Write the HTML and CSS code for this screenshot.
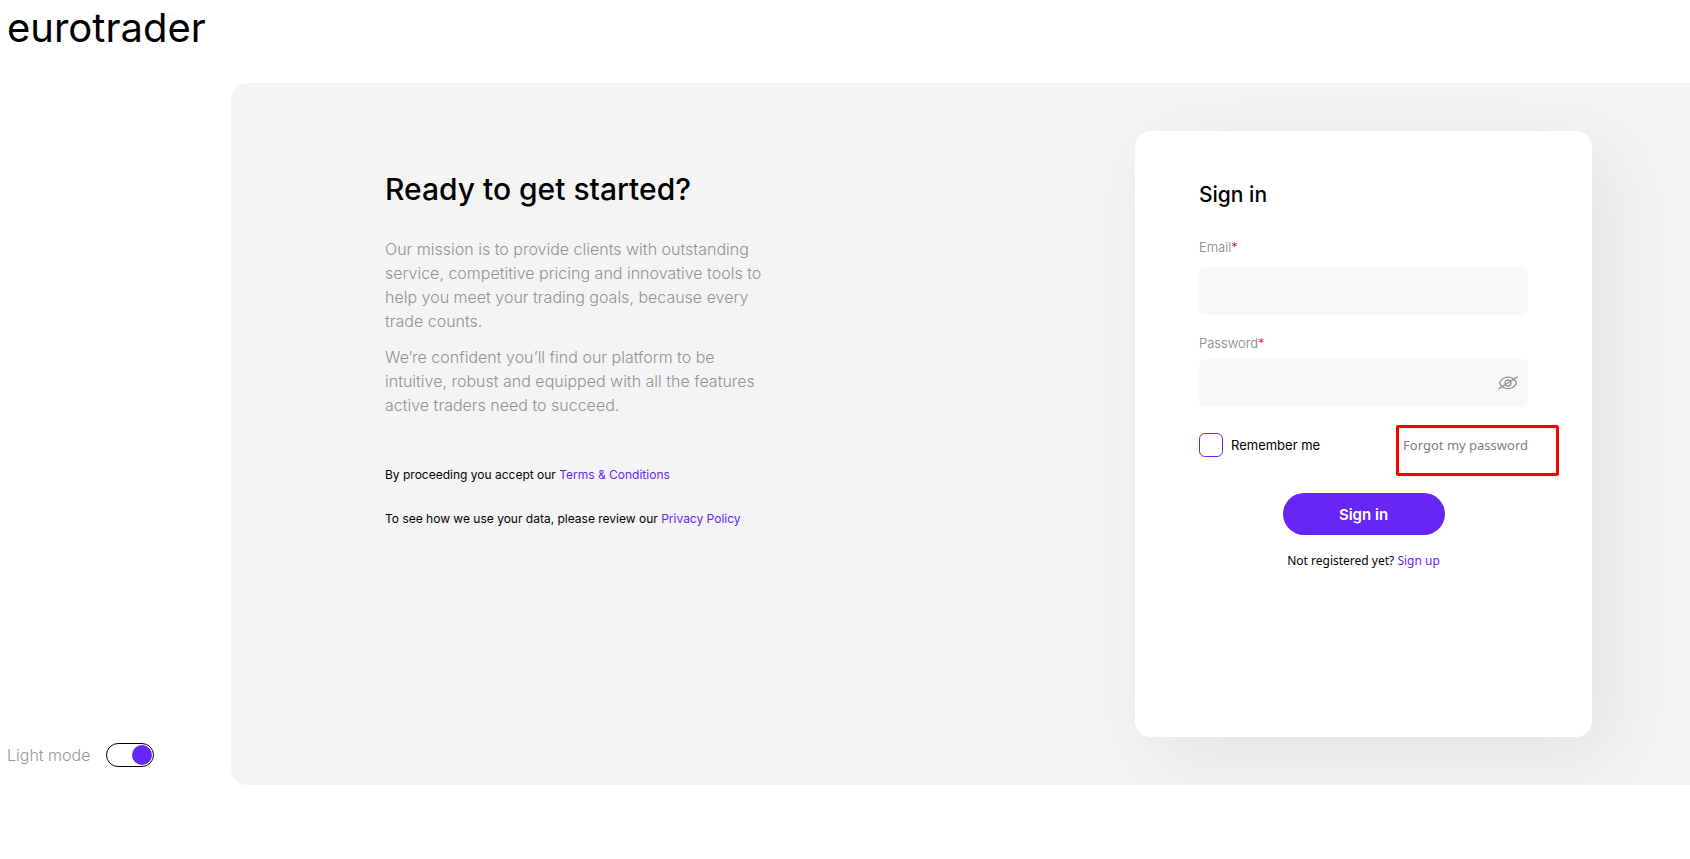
FILE: index.html
```
<!DOCTYPE html>
<html lang="en">
<head>
<meta charset="utf-8">
<meta name="viewport" content="width=device-width, initial-scale=1">
<title>eurotrader – Sign in</title>
<link rel="stylesheet" href="styles.css">
</head>
<body>
<header class="header"><a class="logo" href="#">eurotrader</a></header>
<div class="layout">
  <aside class="sidebar">
    <label class="mode" for="mode">Light mode</label>
    <input class="switch" id="mode" type="checkbox" role="switch" checked>
  </aside>
  <main class="panel">
    <section class="intro">
      <h1 class="intro-title">Ready to get started?</h1>
      <p class="intro-text">Our mission is to provide clients with outstanding<br>service, competitive pricing and innovative tools to<br>help you meet your trading goals, because every<br>trade counts.</p>
      <p class="intro-text">We’re confident you’ll find our platform to be<br>intuitive, robust and equipped with all the features<br>active traders need to succeed.</p>
      <div class="legal">
        <p class="legal-line">By proceeding you accept our <a class="link" href="#">Terms &amp; Conditions</a></p>
        <p class="legal-line">To see how we use your data, please review our <a class="link" href="#">Privacy Policy</a></p>
      </div>
    </section>
    <form class="card">
      <h2 class="card-title">Sign in</h2>
      <div class="field field-email">
        <label class="label" for="email">Email<span class="required">*</span></label>
        <input class="input" id="email" type="email">
      </div>
      <div class="field">
        <label class="label" for="password">Password<span class="required">*</span></label>
        <div class="password">
          <input class="input" id="password" type="password">
          <button class="reveal" type="button" aria-label="Show password">
            <svg width="20" height="14" viewBox="0 0 20 14" fill="none" stroke="#909095" stroke-width="1.3" stroke-linecap="round">
              <path d="M1.5 7C3.4 3 6.4 1.2 10 1.2S16.600 3 18.500 7C16.600 11 13.600 12.600 10 12.600S3.400 11 1.500 7Z"/>
              <circle cx="10" cy="7" r="3"/>
              <path d="M.7 12.700 19.300 1"/>
            </svg>
          </button>
        </div>
      </div>
      <div class="options">
        <input class="checkbox" id="remember" type="checkbox">
        <label class="remember" for="remember">Remember me</label>
        <a class="forgot" href="#">Forgot my password</a>
      </div>
      <button class="submit" type="submit">Sign in</button>
      <p class="signup">Not registered yet? <a class="link" href="#">Sign up</a></p>
    </form>
  </main>
</div>
</body>
</html>
```
FILE: styles.css
```
* { box-sizing: border-box; }

body {
  margin: 0;
  background: #fff;
  color: #000;
  font-family: Inter, "Liberation Sans", sans-serif;
  overflow-x: hidden;
}

h1, h2, p { margin: 0; }

a { text-decoration: none; }

.header {
  height: 83px;
  padding: 4px 7px;
}

.logo {
  color: #000;
  font-size: 40px;
  font-weight: 400;
  line-height: 48px;
}

.layout { display: flex; }

.sidebar {
  flex: none;
  width: 231px;
  display: flex;
  align-items: flex-end;
  gap: 16px;
  padding: 0 0 18px 7px;
}

.mode {
  color: #979797;
  font-size: 16px;
  font-weight: 300;
  line-height: 24px;
}

.switch {
  appearance: none;
  display: flex;
  justify-content: flex-end;
  width: 48px;
  height: 24px;
  margin: 0;
  padding: 1px;
  border: 1px solid #000;
  border-radius: 12px;
}

.switch::before {
  content: "";
  width: 20px;
  height: 20px;
  border-radius: 50%;
  background: #6726f5;
}

.switch:not(:checked) { justify-content: flex-start; }

.panel {
  flex: 1;
  display: flex;
  justify-content: space-between;
  align-items: flex-start;
  padding: 48px 98px 48px 154px;
  border-radius: 16px 0 0 16px;
  background: #f4f4f4;
}

.intro { padding-top: 38px; }

.intro-title {
  margin-bottom: 28px;
  font-size: 30px;
  font-weight: 500;
  line-height: 40px;
}

.intro-text {
  margin-bottom: 12px;
  color: #929292;
  font-size: 16px;
  font-weight: 300;
  line-height: 24px;
}

.legal {
  display: grid;
  gap: 24px;
  margin-top: 48px;
}

.legal-line {
  font-size: 12px;
  line-height: 20px;
}

.link { color: #6726f5; }

.card {
  display: flex;
  flex-direction: column;
  width: 457px;
  padding: 48px 64px 166px;
  border-radius: 16px;
  background: #fff;
  box-shadow: 20px 20px 80px rgba(0, 0, 0, .07);
}

.card-title {
  margin-bottom: 24px;
  font-size: 21px;
  font-weight: 500;
  line-height: 32px;
}

.field {
  display: grid;
  gap: 4px;
}

.field-email {
  gap: 8px;
  margin-bottom: 16px;
}

.label {
  color: #7f7f7f;
  font-size: 13px;
  font-weight: 300;
  line-height: 24px;
}

.required { color: #f00; }

.input {
  width: 100%;
  height: 48px;
  padding: 0 16px;
  border: 0;
  border-radius: 6px;
  background: #f8f8f8;
  font: inherit;
}

.password {
  display: grid;
  align-items: center;
}

.password > * { grid-area: 1 / 1; }

.reveal {
  display: flex;
  justify-self: end;
  margin-right: 10px;
  padding: 0;
  border: 0;
  background: none;
}

.options {
  display: flex;
  align-items: center;
  gap: 8px;
  margin-top: 26px;
}

.checkbox {
  appearance: none;
  width: 24px;
  height: 24px;
  margin: 0;
  border: 1px solid #6726f5;
  border-radius: 6px;
}

.remember {
  font-size: 13px;
  line-height: 20px;
}

.forgot {
  position: relative;
  margin-left: auto;
  color: #808080;
  font-family: "Noto Sans", sans-serif;
  font-size: 13px;
  line-height: 20px;
}

/* Highlight frame around the reset link */
.forgot::after {
  content: "";
  position: absolute;
  inset: -10px -31px -21px -7px;
  border: 3px solid #f00;
  border-radius: 2px;
}

.submit {
  align-self: center;
  width: 162px;
  height: 42px;
  margin-top: 36px;
  padding: 0;
  border: 0;
  border-radius: 21px;
  background: #6726f5;
  color: #fff;
  font-family: inherit;
  font-size: 15px;
  font-weight: 600;
}

.signup {
  margin-top: 16px;
  font-family: "Noto Sans", sans-serif;
  font-size: 12px;
  line-height: 20px;
  text-align: center;
}
```
